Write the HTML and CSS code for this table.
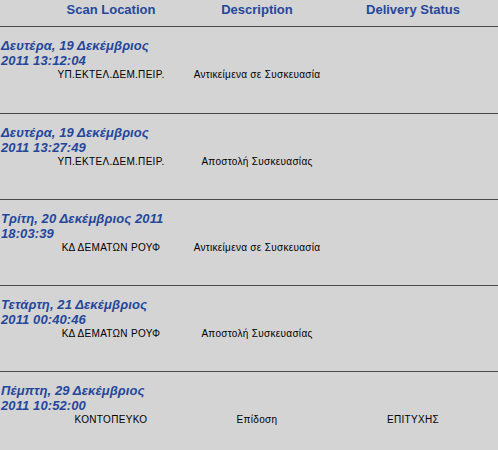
FILE: index.html
```html
<!DOCTYPE html>
<html lang="el">
<head>
<meta charset="utf-8">
<link rel="stylesheet" href="styles.css">
</head>
<body>
<div class="track">
  <div class="cols head">
    <div class="c1">Scan Location</div>
    <div class="c2">Description</div>
    <div class="c3">Delivery Status</div>
  </div>
  <div class="entry first">
    <div class="date">Δευτέρα, 19 Δεκέμβριος 2011 13:12:04</div>
    <div class="cols data">
      <div class="c1">ΥΠ.ΕΚΤΕΛ.ΔΕΜ.ΠΕΙΡ.</div>
      <div class="c2">Αντικείμενα σε Συσκευασία</div>
      <div class="c3"></div>
    </div>
  </div>
  <div class="entry">
    <div class="date">Δευτέρα, 19 Δεκέμβριος 2011 13:27:49</div>
    <div class="cols data">
      <div class="c1">ΥΠ.ΕΚΤΕΛ.ΔΕΜ.ΠΕΙΡ.</div>
      <div class="c2">Αποστολή Συσκευασίας</div>
      <div class="c3"></div>
    </div>
  </div>
  <div class="entry">
    <div class="date">Τρίτη, 20 Δεκέμβριος 2011 18:03:39</div>
    <div class="cols data">
      <div class="c1">ΚΔ ΔΕΜΑΤΩΝ ΡΟΥΦ</div>
      <div class="c2">Αντικείμενα σε Συσκευασία</div>
      <div class="c3"></div>
    </div>
  </div>
  <div class="entry">
    <div class="date">Τετάρτη, 21 Δεκέμβριος 2011 00:40:46</div>
    <div class="cols data">
      <div class="c1">ΚΔ ΔΕΜΑΤΩΝ ΡΟΥΦ</div>
      <div class="c2">Αποστολή Συσκευασίας</div>
      <div class="c3"></div>
    </div>
  </div>
  <div class="entry">
    <div class="date">Πέμπτη, 29 Δεκέμβριος 2011 10:52:00</div>
    <div class="cols data">
      <div class="c1">ΚΟΝΤΟΠΕΥΚΟ</div>
      <div class="c2">Επίδοση</div>
      <div class="c3">ΕΠΙΤΥΧΗΣ</div>
    </div>
  </div>
</div>
</body>
</html>
```
FILE: styles.css
```css
html, body {
  margin: 0;
  padding: 0;
  background: #d4d4d4;
  font-family: "Liberation Sans", Arial, sans-serif;
}
.track {
  width: 498px;
}
.cols {
  display: grid;
  grid-template-columns: 36px 150px 142px 170px;
  text-align: center;
}
.c1 { grid-column: 2; }
.c2 { grid-column: 3; }
.c3 { grid-column: 4; }
.head {
  height: 26px;
  box-sizing: border-box;
  padding-top: 2px;
  font-size: 13px;
  font-weight: bold;
  color: #24479c;
  line-height: 16px;
}
.entry {
  border-top: 1px solid #4a4a4a;
  height: 86px;
  box-sizing: border-box;
  padding-top: 11px;
}
.entry.first {
  height: 87px;
}
.date {
  width: 165px;
  padding-left: 1px;
  font-size: 13px;
  font-weight: bold;
  font-style: italic;
  color: #24479c;
  line-height: 15px;
  letter-spacing: 0.1px;
}
.data {
  font-size: 10px;
  line-height: 12px;
  color: #000;
  margin-top: 1px;
  letter-spacing: 0.3px;
}
```
